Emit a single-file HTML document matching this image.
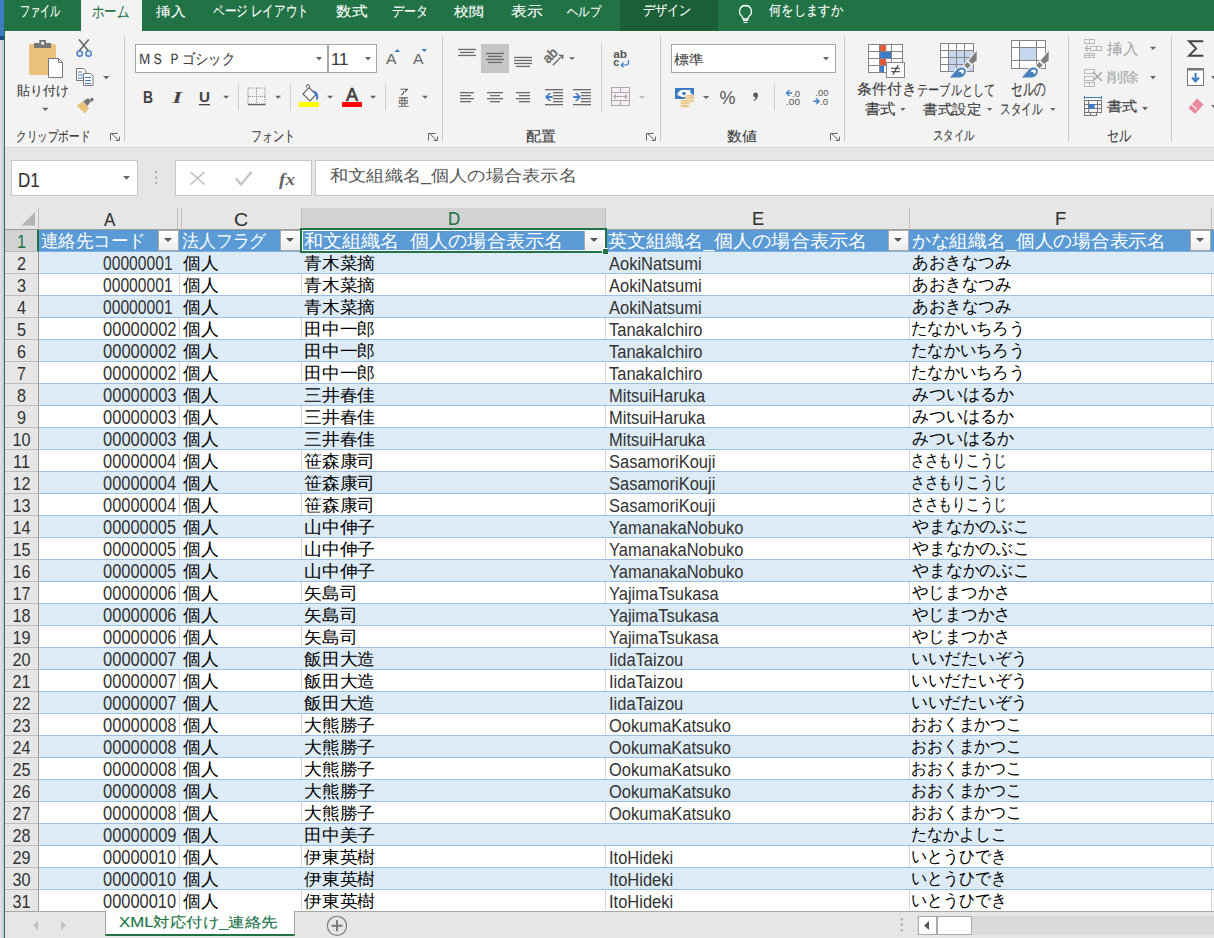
<!DOCTYPE html>
<html><head><meta charset="utf-8">
<style>
*{box-sizing:border-box}
html,body{margin:0;padding:0}
body{width:1214px;height:938px;overflow:hidden;position:relative;background:#e6e6e6;font-family:"Liberation Sans",sans-serif;color:#262626}
.a{position:absolute}
.t{position:absolute;white-space:nowrap;line-height:1;transform-origin:0 0}
#lstrip{left:0;top:0;width:4px;height:938px;background:linear-gradient(to right,#dfe3ec,#c3c9d6)}
#lstrip2{left:0;top:0;width:4px;height:36px;background:#3d7cc2}
#lstrip3{left:0;top:36px;width:4px;height:4px;background:#1f4b84}
#gline{left:4px;top:0;width:1px;height:938px;background:#217346}
#tabbar{left:4px;top:0;width:1210px;height:31px;background:#217346}
#ribbon{left:5px;top:31px;width:1209px;height:117px;background:#f3f3f3;border-bottom:1px solid #d6d6d6}
.box{position:absolute;background:#fff;border:1px solid #c6c6c6}
.sep{position:absolute;width:1px;background:#c8c8c8}
.arr{position:absolute;width:0;height:0;border-left:3px solid transparent;border-right:3px solid transparent;border-top:3px solid #555}
/* grid */
.row{position:absolute;left:39px;width:1175px;height:22px;border-bottom:1px solid #9bc2e6}
.row.bl{background:#ddebf7}
.row.wh{background:#fff linear-gradient(to right,transparent 140px,#d4d4d4 140px,#d4d4d4 141px,transparent 141px,transparent 262px,#d4d4d4 262px,#d4d4d4 263px,transparent 263px,transparent 566px,#d4d4d4 566px,#d4d4d4 567px,transparent 567px,transparent 870px,#d4d4d4 870px,#d4d4d4 871px,transparent 871px,transparent 1172px,#d4d4d4 1172px,#d4d4d4 1173px,transparent 1173px)}
.rh{position:absolute;left:5px;width:34px;height:22px;background:#e6e6e6;border-bottom:1px solid #bdbdbd;border-right:1px solid #9c9c9c}
.ch{position:absolute;top:208px;height:22px;background:#e6e6e6;border-right:1px solid #bdbdbd;border-bottom:1px solid #9b9b9b}
.hdr{position:absolute;top:230px;height:22px;background:#5b9bd5;border-bottom:1px solid #80b0e0}
.dd{position:absolute;top:230px;width:21px;height:21px;background:linear-gradient(#fff,#ececec);border:1px solid #a8a8a8}
.dd:after{content:"";position:absolute;left:5px;top:7px;border-left:4px solid transparent;border-right:4px solid transparent;border-top:4px solid #555}
#sheetbar{left:5px;top:911px;width:1209px;height:27px;background:#e6e6e6;border-top:1px solid #a8a8a8}
</style></head><body>
<div id="lstrip" class="a"></div><div id="lstrip2" class="a"></div><div id="lstrip3" class="a"></div>
<div id="tabbar" class="a"></div>
<div class="a" style="left:81px;top:0;width:61px;height:31px;background:#f3f3f3"></div>
<div class="a" style="left:620px;top:0;width:98px;height:31px;background:#1b5f38"></div>
<div id="gline" class="a"></div>
<div id="ribbon" class="a"></div>
<!-- formula bar -->
<div class="box" style="left:11px;top:160px;width:127px;height:36px"></div>
<div class="box" style="left:175px;top:160px;width:137px;height:36px"></div>
<div class="box" style="left:315px;top:160px;width:910px;height:36px"></div>
<!-- column headers -->
<div class="ch" style="left:5px;width:34px"></div>
<div class="ch" style="left:39px;width:139px"></div>
<div class="ch" style="left:178px;width:4px"></div>
<div class="ch" style="left:182px;width:120px"></div>
<div class="ch" style="left:302px;width:304px;background:#d2d2d2;border-bottom:none"></div>
<div class="ch" style="left:606px;width:304px"></div>
<div class="ch" style="left:910px;width:302px"></div>
<div class="ch" style="left:1212px;width:10px"></div>
<div class="row bl" style="top:252px"><div class="t" style="left:64.11px;top:1.91px;font-size:19.29px;transform:scaleX(0.8119);color:#333">00000001</div><div class="t" style="left:143.75px;top:2.97px;font-size:17.23px;transform:scaleX(1.0461);color:#000">個人</div><div class="t" style="left:265.45px;top:2.97px;font-size:17.23px;transform:scaleX(1.0461);color:#000">青木菜摘</div><div class="t" style="left:570.20px;top:4.44px;font-size:17.60px;transform:scaleX(0.9378);color:#333">AokiNatsumi</div><div class="t" style="left:872.67px;top:2.60px;font-size:16.97px;transform:scaleX(0.9730);color:#000">あおきなつみ</div></div>
<div class="rh" style="top:252px"><div class="t" style="left:0;width:37.83px;text-align:center;top:3.21px;font-size:18.57px;transform:scaleX(0.8723);color:#333">2</div></div>
<div class="row wh" style="top:274px"><div class="t" style="left:64.11px;top:1.91px;font-size:19.29px;transform:scaleX(0.8119);color:#333">00000001</div><div class="t" style="left:143.75px;top:2.97px;font-size:17.23px;transform:scaleX(1.0461);color:#000">個人</div><div class="t" style="left:265.45px;top:2.97px;font-size:17.23px;transform:scaleX(1.0461);color:#000">青木菜摘</div><div class="t" style="left:570.20px;top:4.44px;font-size:17.60px;transform:scaleX(0.9378);color:#333">AokiNatsumi</div><div class="t" style="left:872.67px;top:2.60px;font-size:16.97px;transform:scaleX(0.9730);color:#000">あおきなつみ</div></div>
<div class="rh" style="top:274px"><div class="t" style="left:0;width:37.83px;text-align:center;top:3.21px;font-size:18.57px;transform:scaleX(0.8723);color:#333">3</div></div>
<div class="row bl" style="top:296px"><div class="t" style="left:64.11px;top:1.91px;font-size:19.29px;transform:scaleX(0.8119);color:#333">00000001</div><div class="t" style="left:143.75px;top:2.97px;font-size:17.23px;transform:scaleX(1.0461);color:#000">個人</div><div class="t" style="left:265.45px;top:2.97px;font-size:17.23px;transform:scaleX(1.0461);color:#000">青木菜摘</div><div class="t" style="left:570.20px;top:4.44px;font-size:17.60px;transform:scaleX(0.9378);color:#333">AokiNatsumi</div><div class="t" style="left:872.67px;top:2.60px;font-size:16.97px;transform:scaleX(0.9730);color:#000">あおきなつみ</div></div>
<div class="rh" style="top:296px"><div class="t" style="left:0;width:37.83px;text-align:center;top:3.21px;font-size:18.57px;transform:scaleX(0.8723);color:#333">4</div></div>
<div class="row wh" style="top:318px"><div class="t" style="left:64.09px;top:1.91px;font-size:19.29px;transform:scaleX(0.8569);color:#333">00000002</div><div class="t" style="left:143.75px;top:2.97px;font-size:17.23px;transform:scaleX(1.0461);color:#000">個人</div><div class="t" style="left:265.45px;top:2.97px;font-size:17.23px;transform:scaleX(1.0461);color:#000">田中一郎</div><div class="t" style="left:570.20px;top:4.44px;font-size:17.60px;transform:scaleX(0.9378);color:#333">TanakaIchiro</div><div class="t" style="left:872.28px;top:2.60px;font-size:16.97px;transform:scaleX(0.9574);color:#000">たなかいちろう</div></div>
<div class="rh" style="top:318px"><div class="t" style="left:0;width:37.83px;text-align:center;top:3.21px;font-size:18.57px;transform:scaleX(0.8723);color:#333">5</div></div>
<div class="row bl" style="top:340px"><div class="t" style="left:64.09px;top:1.91px;font-size:19.29px;transform:scaleX(0.8569);color:#333">00000002</div><div class="t" style="left:143.75px;top:2.97px;font-size:17.23px;transform:scaleX(1.0461);color:#000">個人</div><div class="t" style="left:265.45px;top:2.97px;font-size:17.23px;transform:scaleX(1.0461);color:#000">田中一郎</div><div class="t" style="left:570.20px;top:4.44px;font-size:17.60px;transform:scaleX(0.9378);color:#333">TanakaIchiro</div><div class="t" style="left:872.28px;top:2.60px;font-size:16.97px;transform:scaleX(0.9574);color:#000">たなかいちろう</div></div>
<div class="rh" style="top:340px"><div class="t" style="left:0;width:37.83px;text-align:center;top:3.21px;font-size:18.57px;transform:scaleX(0.8723);color:#333">6</div></div>
<div class="row wh" style="top:362px"><div class="t" style="left:64.09px;top:1.91px;font-size:19.29px;transform:scaleX(0.8569);color:#333">00000002</div><div class="t" style="left:143.75px;top:2.97px;font-size:17.23px;transform:scaleX(1.0461);color:#000">個人</div><div class="t" style="left:265.45px;top:2.97px;font-size:17.23px;transform:scaleX(1.0461);color:#000">田中一郎</div><div class="t" style="left:570.20px;top:4.44px;font-size:17.60px;transform:scaleX(0.9378);color:#333">TanakaIchiro</div><div class="t" style="left:872.28px;top:2.60px;font-size:16.97px;transform:scaleX(0.9574);color:#000">たなかいちろう</div></div>
<div class="rh" style="top:362px"><div class="t" style="left:0;width:37.83px;text-align:center;top:3.21px;font-size:18.57px;transform:scaleX(0.8723);color:#333">7</div></div>
<div class="row bl" style="top:384px"><div class="t" style="left:64.09px;top:1.91px;font-size:19.29px;transform:scaleX(0.8569);color:#333">00000003</div><div class="t" style="left:143.75px;top:2.97px;font-size:17.23px;transform:scaleX(1.0461);color:#000">個人</div><div class="t" style="left:265.45px;top:2.97px;font-size:17.23px;transform:scaleX(1.0461);color:#000">三井春佳</div><div class="t" style="left:570.20px;top:4.44px;font-size:17.60px;transform:scaleX(0.9378);color:#333">MitsuiHaruka</div><div class="t" style="left:872.65px;top:2.60px;font-size:16.97px;transform:scaleX(0.9982);color:#000">みついはるか</div></div>
<div class="rh" style="top:384px"><div class="t" style="left:0;width:37.83px;text-align:center;top:3.21px;font-size:18.57px;transform:scaleX(0.8723);color:#333">8</div></div>
<div class="row wh" style="top:406px"><div class="t" style="left:64.09px;top:1.91px;font-size:19.29px;transform:scaleX(0.8569);color:#333">00000003</div><div class="t" style="left:143.75px;top:2.97px;font-size:17.23px;transform:scaleX(1.0461);color:#000">個人</div><div class="t" style="left:265.45px;top:2.97px;font-size:17.23px;transform:scaleX(1.0461);color:#000">三井春佳</div><div class="t" style="left:570.20px;top:4.44px;font-size:17.60px;transform:scaleX(0.9378);color:#333">MitsuiHaruka</div><div class="t" style="left:872.65px;top:2.60px;font-size:16.97px;transform:scaleX(0.9982);color:#000">みついはるか</div></div>
<div class="rh" style="top:406px"><div class="t" style="left:0;width:37.83px;text-align:center;top:3.21px;font-size:18.57px;transform:scaleX(0.8723);color:#333">9</div></div>
<div class="row bl" style="top:428px"><div class="t" style="left:64.09px;top:1.91px;font-size:19.29px;transform:scaleX(0.8569);color:#333">00000003</div><div class="t" style="left:143.75px;top:2.97px;font-size:17.23px;transform:scaleX(1.0461);color:#000">個人</div><div class="t" style="left:265.45px;top:2.97px;font-size:17.23px;transform:scaleX(1.0461);color:#000">三井春佳</div><div class="t" style="left:570.20px;top:4.44px;font-size:17.60px;transform:scaleX(0.9378);color:#333">MitsuiHaruka</div><div class="t" style="left:872.65px;top:2.60px;font-size:16.97px;transform:scaleX(0.9982);color:#000">みついはるか</div></div>
<div class="rh" style="top:428px"><div class="t" style="left:0;width:37.83px;text-align:center;top:3.21px;font-size:18.57px;transform:scaleX(0.8723);color:#333">10</div></div>
<div class="row wh" style="top:450px"><div class="t" style="left:64.09px;top:1.91px;font-size:19.29px;transform:scaleX(0.8520);color:#333">00000004</div><div class="t" style="left:143.75px;top:2.97px;font-size:17.23px;transform:scaleX(1.0461);color:#000">個人</div><div class="t" style="left:265.45px;top:2.97px;font-size:17.23px;transform:scaleX(1.0461);color:#000">笹森康司</div><div class="t" style="left:570.20px;top:4.44px;font-size:17.60px;transform:scaleX(0.9378);color:#333">SasamoriKouji</div><div class="t" style="left:871.79px;top:2.60px;font-size:16.97px;transform:scaleX(0.8081);color:#000">ささもりこうじ</div></div>
<div class="rh" style="top:450px"><div class="t" style="left:0;width:37.83px;text-align:center;top:3.21px;font-size:18.57px;transform:scaleX(0.8723);color:#333">11</div></div>
<div class="row bl" style="top:472px"><div class="t" style="left:64.09px;top:1.91px;font-size:19.29px;transform:scaleX(0.8520);color:#333">00000004</div><div class="t" style="left:143.75px;top:2.97px;font-size:17.23px;transform:scaleX(1.0461);color:#000">個人</div><div class="t" style="left:265.45px;top:2.97px;font-size:17.23px;transform:scaleX(1.0461);color:#000">笹森康司</div><div class="t" style="left:570.20px;top:4.44px;font-size:17.60px;transform:scaleX(0.9378);color:#333">SasamoriKouji</div><div class="t" style="left:871.79px;top:2.60px;font-size:16.97px;transform:scaleX(0.8081);color:#000">ささもりこうじ</div></div>
<div class="rh" style="top:472px"><div class="t" style="left:0;width:37.83px;text-align:center;top:3.21px;font-size:18.57px;transform:scaleX(0.8723);color:#333">12</div></div>
<div class="row wh" style="top:494px"><div class="t" style="left:64.09px;top:1.91px;font-size:19.29px;transform:scaleX(0.8520);color:#333">00000004</div><div class="t" style="left:143.75px;top:2.97px;font-size:17.23px;transform:scaleX(1.0461);color:#000">個人</div><div class="t" style="left:265.45px;top:2.97px;font-size:17.23px;transform:scaleX(1.0461);color:#000">笹森康司</div><div class="t" style="left:570.20px;top:4.44px;font-size:17.60px;transform:scaleX(0.9378);color:#333">SasamoriKouji</div><div class="t" style="left:871.79px;top:2.60px;font-size:16.97px;transform:scaleX(0.8081);color:#000">ささもりこうじ</div></div>
<div class="rh" style="top:494px"><div class="t" style="left:0;width:37.83px;text-align:center;top:3.21px;font-size:18.57px;transform:scaleX(0.8723);color:#333">13</div></div>
<div class="row bl" style="top:516px"><div class="t" style="left:64.09px;top:1.91px;font-size:19.29px;transform:scaleX(0.8520);color:#333">00000005</div><div class="t" style="left:143.75px;top:2.97px;font-size:17.23px;transform:scaleX(1.0461);color:#000">個人</div><div class="t" style="left:265.45px;top:2.97px;font-size:17.23px;transform:scaleX(1.0461);color:#000">山中伸子</div><div class="t" style="left:570.20px;top:4.44px;font-size:17.60px;transform:scaleX(0.9378);color:#333">YamanakaNobuko</div><div class="t" style="left:873.08px;top:2.60px;font-size:16.97px;transform:scaleX(0.9912);color:#000">やまなかのぶこ</div></div>
<div class="rh" style="top:516px"><div class="t" style="left:0;width:37.83px;text-align:center;top:3.21px;font-size:18.57px;transform:scaleX(0.8723);color:#333">14</div></div>
<div class="row wh" style="top:538px"><div class="t" style="left:64.09px;top:1.91px;font-size:19.29px;transform:scaleX(0.8520);color:#333">00000005</div><div class="t" style="left:143.75px;top:2.97px;font-size:17.23px;transform:scaleX(1.0461);color:#000">個人</div><div class="t" style="left:265.45px;top:2.97px;font-size:17.23px;transform:scaleX(1.0461);color:#000">山中伸子</div><div class="t" style="left:570.20px;top:4.44px;font-size:17.60px;transform:scaleX(0.9378);color:#333">YamanakaNobuko</div><div class="t" style="left:873.08px;top:2.60px;font-size:16.97px;transform:scaleX(0.9912);color:#000">やまなかのぶこ</div></div>
<div class="rh" style="top:538px"><div class="t" style="left:0;width:37.83px;text-align:center;top:3.21px;font-size:18.57px;transform:scaleX(0.8723);color:#333">15</div></div>
<div class="row bl" style="top:560px"><div class="t" style="left:64.09px;top:1.91px;font-size:19.29px;transform:scaleX(0.8520);color:#333">00000005</div><div class="t" style="left:143.75px;top:2.97px;font-size:17.23px;transform:scaleX(1.0461);color:#000">個人</div><div class="t" style="left:265.45px;top:2.97px;font-size:17.23px;transform:scaleX(1.0461);color:#000">山中伸子</div><div class="t" style="left:570.20px;top:4.44px;font-size:17.60px;transform:scaleX(0.9378);color:#333">YamanakaNobuko</div><div class="t" style="left:873.08px;top:2.60px;font-size:16.97px;transform:scaleX(0.9912);color:#000">やまなかのぶこ</div></div>
<div class="rh" style="top:560px"><div class="t" style="left:0;width:37.83px;text-align:center;top:3.21px;font-size:18.57px;transform:scaleX(0.8723);color:#333">16</div></div>
<div class="row wh" style="top:582px"><div class="t" style="left:64.09px;top:1.91px;font-size:19.29px;transform:scaleX(0.8569);color:#333">00000006</div><div class="t" style="left:143.75px;top:2.97px;font-size:17.23px;transform:scaleX(1.0461);color:#000">個人</div><div class="t" style="left:265.45px;top:2.97px;font-size:17.23px;transform:scaleX(1.0461);color:#000">矢島司</div><div class="t" style="left:570.20px;top:4.44px;font-size:17.60px;transform:scaleX(0.9378);color:#333">YajimaTsukasa</div><div class="t" style="left:873.09px;top:2.60px;font-size:16.97px;transform:scaleX(0.9636);color:#000">やじまつかさ</div></div>
<div class="rh" style="top:582px"><div class="t" style="left:0;width:37.83px;text-align:center;top:3.21px;font-size:18.57px;transform:scaleX(0.8723);color:#333">17</div></div>
<div class="row bl" style="top:604px"><div class="t" style="left:64.09px;top:1.91px;font-size:19.29px;transform:scaleX(0.8569);color:#333">00000006</div><div class="t" style="left:143.75px;top:2.97px;font-size:17.23px;transform:scaleX(1.0461);color:#000">個人</div><div class="t" style="left:265.45px;top:2.97px;font-size:17.23px;transform:scaleX(1.0461);color:#000">矢島司</div><div class="t" style="left:570.20px;top:4.44px;font-size:17.60px;transform:scaleX(0.9378);color:#333">YajimaTsukasa</div><div class="t" style="left:873.09px;top:2.60px;font-size:16.97px;transform:scaleX(0.9636);color:#000">やじまつかさ</div></div>
<div class="rh" style="top:604px"><div class="t" style="left:0;width:37.83px;text-align:center;top:3.21px;font-size:18.57px;transform:scaleX(0.8723);color:#333">18</div></div>
<div class="row wh" style="top:626px"><div class="t" style="left:64.09px;top:1.91px;font-size:19.29px;transform:scaleX(0.8569);color:#333">00000006</div><div class="t" style="left:143.75px;top:2.97px;font-size:17.23px;transform:scaleX(1.0461);color:#000">個人</div><div class="t" style="left:265.45px;top:2.97px;font-size:17.23px;transform:scaleX(1.0461);color:#000">矢島司</div><div class="t" style="left:570.20px;top:4.44px;font-size:17.60px;transform:scaleX(0.9378);color:#333">YajimaTsukasa</div><div class="t" style="left:873.09px;top:2.60px;font-size:16.97px;transform:scaleX(0.9636);color:#000">やじまつかさ</div></div>
<div class="rh" style="top:626px"><div class="t" style="left:0;width:37.83px;text-align:center;top:3.21px;font-size:18.57px;transform:scaleX(0.8723);color:#333">19</div></div>
<div class="row bl" style="top:648px"><div class="t" style="left:64.09px;top:1.91px;font-size:19.29px;transform:scaleX(0.8569);color:#333">00000007</div><div class="t" style="left:143.75px;top:2.97px;font-size:17.23px;transform:scaleX(1.0461);color:#000">個人</div><div class="t" style="left:265.45px;top:2.97px;font-size:17.23px;transform:scaleX(1.0461);color:#000">飯田大造</div><div class="t" style="left:570.20px;top:4.44px;font-size:17.60px;transform:scaleX(0.9378);color:#333">IidaTaizou</div><div class="t" style="left:872.25px;top:2.60px;font-size:16.97px;transform:scaleX(0.9850);color:#000">いいだたいぞう</div></div>
<div class="rh" style="top:648px"><div class="t" style="left:0;width:37.83px;text-align:center;top:3.21px;font-size:18.57px;transform:scaleX(0.8723);color:#333">20</div></div>
<div class="row wh" style="top:670px"><div class="t" style="left:64.09px;top:1.91px;font-size:19.29px;transform:scaleX(0.8569);color:#333">00000007</div><div class="t" style="left:143.75px;top:2.97px;font-size:17.23px;transform:scaleX(1.0461);color:#000">個人</div><div class="t" style="left:265.45px;top:2.97px;font-size:17.23px;transform:scaleX(1.0461);color:#000">飯田大造</div><div class="t" style="left:570.20px;top:4.44px;font-size:17.60px;transform:scaleX(0.9378);color:#333">IidaTaizou</div><div class="t" style="left:872.25px;top:2.60px;font-size:16.97px;transform:scaleX(0.9850);color:#000">いいだたいぞう</div></div>
<div class="rh" style="top:670px"><div class="t" style="left:0;width:37.83px;text-align:center;top:3.21px;font-size:18.57px;transform:scaleX(0.8723);color:#333">21</div></div>
<div class="row bl" style="top:692px"><div class="t" style="left:64.09px;top:1.91px;font-size:19.29px;transform:scaleX(0.8569);color:#333">00000007</div><div class="t" style="left:143.75px;top:2.97px;font-size:17.23px;transform:scaleX(1.0461);color:#000">個人</div><div class="t" style="left:265.45px;top:2.97px;font-size:17.23px;transform:scaleX(1.0461);color:#000">飯田大造</div><div class="t" style="left:570.20px;top:4.44px;font-size:17.60px;transform:scaleX(0.9378);color:#333">IidaTaizou</div><div class="t" style="left:872.25px;top:2.60px;font-size:16.97px;transform:scaleX(0.9850);color:#000">いいだたいぞう</div></div>
<div class="rh" style="top:692px"><div class="t" style="left:0;width:37.83px;text-align:center;top:3.21px;font-size:18.57px;transform:scaleX(0.8723);color:#333">22</div></div>
<div class="row wh" style="top:714px"><div class="t" style="left:64.09px;top:1.91px;font-size:19.29px;transform:scaleX(0.8569);color:#333">00000008</div><div class="t" style="left:143.75px;top:2.97px;font-size:17.23px;transform:scaleX(1.0461);color:#000">個人</div><div class="t" style="left:265.45px;top:2.97px;font-size:17.23px;transform:scaleX(1.0461);color:#000">大熊勝子</div><div class="t" style="left:570.20px;top:4.44px;font-size:17.60px;transform:scaleX(0.9378);color:#333">OokumaKatsuko</div><div class="t" style="left:872.31px;top:2.60px;font-size:16.97px;transform:scaleX(0.9332);color:#000">おおくまかつこ</div></div>
<div class="rh" style="top:714px"><div class="t" style="left:0;width:37.83px;text-align:center;top:3.21px;font-size:18.57px;transform:scaleX(0.8723);color:#333">23</div></div>
<div class="row bl" style="top:736px"><div class="t" style="left:64.09px;top:1.91px;font-size:19.29px;transform:scaleX(0.8569);color:#333">00000008</div><div class="t" style="left:143.75px;top:2.97px;font-size:17.23px;transform:scaleX(1.0461);color:#000">個人</div><div class="t" style="left:265.45px;top:2.97px;font-size:17.23px;transform:scaleX(1.0461);color:#000">大熊勝子</div><div class="t" style="left:570.20px;top:4.44px;font-size:17.60px;transform:scaleX(0.9378);color:#333">OokumaKatsuko</div><div class="t" style="left:872.31px;top:2.60px;font-size:16.97px;transform:scaleX(0.9332);color:#000">おおくまかつこ</div></div>
<div class="rh" style="top:736px"><div class="t" style="left:0;width:37.83px;text-align:center;top:3.21px;font-size:18.57px;transform:scaleX(0.8723);color:#333">24</div></div>
<div class="row wh" style="top:758px"><div class="t" style="left:64.09px;top:1.91px;font-size:19.29px;transform:scaleX(0.8569);color:#333">00000008</div><div class="t" style="left:143.75px;top:2.97px;font-size:17.23px;transform:scaleX(1.0461);color:#000">個人</div><div class="t" style="left:265.45px;top:2.97px;font-size:17.23px;transform:scaleX(1.0461);color:#000">大熊勝子</div><div class="t" style="left:570.20px;top:4.44px;font-size:17.60px;transform:scaleX(0.9378);color:#333">OokumaKatsuko</div><div class="t" style="left:872.31px;top:2.60px;font-size:16.97px;transform:scaleX(0.9332);color:#000">おおくまかつこ</div></div>
<div class="rh" style="top:758px"><div class="t" style="left:0;width:37.83px;text-align:center;top:3.21px;font-size:18.57px;transform:scaleX(0.8723);color:#333">25</div></div>
<div class="row bl" style="top:780px"><div class="t" style="left:64.09px;top:1.91px;font-size:19.29px;transform:scaleX(0.8569);color:#333">00000008</div><div class="t" style="left:143.75px;top:2.97px;font-size:17.23px;transform:scaleX(1.0461);color:#000">個人</div><div class="t" style="left:265.45px;top:2.97px;font-size:17.23px;transform:scaleX(1.0461);color:#000">大熊勝子</div><div class="t" style="left:570.20px;top:4.44px;font-size:17.60px;transform:scaleX(0.9378);color:#333">OokumaKatsuko</div><div class="t" style="left:872.31px;top:2.60px;font-size:16.97px;transform:scaleX(0.9332);color:#000">おおくまかつこ</div></div>
<div class="rh" style="top:780px"><div class="t" style="left:0;width:37.83px;text-align:center;top:3.21px;font-size:18.57px;transform:scaleX(0.8723);color:#333">26</div></div>
<div class="row wh" style="top:802px"><div class="t" style="left:64.09px;top:1.91px;font-size:19.29px;transform:scaleX(0.8569);color:#333">00000008</div><div class="t" style="left:143.75px;top:2.97px;font-size:17.23px;transform:scaleX(1.0461);color:#000">個人</div><div class="t" style="left:265.45px;top:2.97px;font-size:17.23px;transform:scaleX(1.0461);color:#000">大熊勝子</div><div class="t" style="left:570.20px;top:4.44px;font-size:17.60px;transform:scaleX(0.9378);color:#333">OokumaKatsuko</div><div class="t" style="left:872.31px;top:2.60px;font-size:16.97px;transform:scaleX(0.9332);color:#000">おおくまかつこ</div></div>
<div class="rh" style="top:802px"><div class="t" style="left:0;width:37.83px;text-align:center;top:3.21px;font-size:18.57px;transform:scaleX(0.8723);color:#333">27</div></div>
<div class="row bl" style="top:824px"><div class="t" style="left:64.09px;top:1.91px;font-size:19.29px;transform:scaleX(0.8569);color:#333">00000009</div><div class="t" style="left:143.75px;top:2.97px;font-size:17.23px;transform:scaleX(1.0461);color:#000">個人</div><div class="t" style="left:265.45px;top:2.97px;font-size:17.23px;transform:scaleX(1.0461);color:#000">田中美子</div><div class="t" style="left:872.31px;top:2.60px;font-size:16.97px;transform:scaleX(0.9366);color:#000">たなかよしこ</div></div>
<div class="rh" style="top:824px"><div class="t" style="left:0;width:37.83px;text-align:center;top:3.21px;font-size:18.57px;transform:scaleX(0.8723);color:#333">28</div></div>
<div class="row wh" style="top:846px"><div class="t" style="left:64.09px;top:1.91px;font-size:19.29px;transform:scaleX(0.8520);color:#333">00000010</div><div class="t" style="left:143.75px;top:2.97px;font-size:17.23px;transform:scaleX(1.0461);color:#000">個人</div><div class="t" style="left:265.45px;top:2.97px;font-size:17.23px;transform:scaleX(1.0461);color:#000">伊東英樹</div><div class="t" style="left:570.20px;top:4.44px;font-size:17.60px;transform:scaleX(0.9378);color:#333">ItoHideki</div><div class="t" style="left:872.30px;top:2.60px;font-size:16.97px;transform:scaleX(0.9407);color:#000">いとうひでき</div></div>
<div class="rh" style="top:846px"><div class="t" style="left:0;width:37.83px;text-align:center;top:3.21px;font-size:18.57px;transform:scaleX(0.8723);color:#333">29</div></div>
<div class="row bl" style="top:868px"><div class="t" style="left:64.09px;top:1.91px;font-size:19.29px;transform:scaleX(0.8520);color:#333">00000010</div><div class="t" style="left:143.75px;top:2.97px;font-size:17.23px;transform:scaleX(1.0461);color:#000">個人</div><div class="t" style="left:265.45px;top:2.97px;font-size:17.23px;transform:scaleX(1.0461);color:#000">伊東英樹</div><div class="t" style="left:570.20px;top:4.44px;font-size:17.60px;transform:scaleX(0.9378);color:#333">ItoHideki</div><div class="t" style="left:872.30px;top:2.60px;font-size:16.97px;transform:scaleX(0.9407);color:#000">いとうひでき</div></div>
<div class="rh" style="top:868px"><div class="t" style="left:0;width:37.83px;text-align:center;top:3.21px;font-size:18.57px;transform:scaleX(0.8723);color:#333">30</div></div>
<div class="row wh" style="top:890px"><div class="t" style="left:64.09px;top:1.91px;font-size:19.29px;transform:scaleX(0.8520);color:#333">00000010</div><div class="t" style="left:143.75px;top:2.97px;font-size:17.23px;transform:scaleX(1.0461);color:#000">個人</div><div class="t" style="left:265.45px;top:2.97px;font-size:17.23px;transform:scaleX(1.0461);color:#000">伊東英樹</div><div class="t" style="left:570.20px;top:4.44px;font-size:17.60px;transform:scaleX(0.9378);color:#333">ItoHideki</div><div class="t" style="left:872.30px;top:2.60px;font-size:16.97px;transform:scaleX(0.9407);color:#000">いとうひでき</div></div>
<div class="rh" style="top:890px"><div class="t" style="left:0;width:37.83px;text-align:center;top:3.21px;font-size:18.57px;transform:scaleX(0.8723);color:#333">31</div></div>
<!-- header row 1 -->
<div class="hdr" style="left:39px;width:1175px"></div>
<div class="t" style="left:41.37px;top:232.67px;font-size:17.75px;transform:scaleX(0.9706);color:#fff">連絡先コード</div>
<div class="t" style="left:182.18px;top:232.67px;font-size:17.75px;transform:scaleX(0.9372);color:#fff">法人フラグ</div>
<div class="t" style="left:304.23px;top:232.67px;font-size:17.75px;transform:scaleX(1.0622);color:#fff">和文組織名_個人の場合表示名</div>
<div class="t" style="left:608.23px;top:232.67px;font-size:17.75px;transform:scaleX(1.0622);color:#fff">英文組織名_個人の場合表示名</div>
<div class="t" style="left:912.44px;top:232.67px;font-size:17.75px;transform:scaleX(1.0406);color:#fff">かな組織名_個人の場合表示名</div>
<div class="rh" style="top:230px;background:#d2d2d2;border-right:2px solid #217346"><div class="t" style="left:0;width:37.83px;text-align:center;top:3.21px;font-size:18.57px;transform:scaleX(0.8723);color:#217346">1</div></div>
<div class="dd" style="left:158px"></div>
<div class="dd" style="left:280px"></div>
<div class="dd" style="left:584px"></div>
<div class="dd" style="left:888px"></div>
<div class="dd" style="left:1190px"></div>
<div class="a" style="left:300px;top:228px;width:307px;height:25px;border:2px solid #217346;box-shadow:inset 0 0 0 1px #fff"></div>
<div class="a" style="left:602px;top:248px;width:6px;height:6px;background:#217346;border-top:1px solid #fff;border-left:1px solid #fff"></div>
<div id="sheetbar" class="a"></div>
<div class="a" style="left:105px;top:911px;width:190px;height:25px;background:#fff;border-left:1px solid #a8a8a8;border-right:1px solid #a8a8a8;border-bottom:2px solid #217346"></div>
<svg class="a" style="left:0;top:0" width="1214" height="938" viewBox="0 0 1214 938">
<g shape-rendering="crispEdges">
<!-- group separators -->
<rect x="124" y="36" width="1" height="106" fill="#c8c8c8"/>
<rect x="442" y="36" width="1" height="106" fill="#c8c8c8"/>
<rect x="660" y="36" width="1" height="106" fill="#c8c8c8"/>
<rect x="844" y="36" width="1" height="106" fill="#c8c8c8"/>
<rect x="1068" y="36" width="1" height="106" fill="#c8c8c8"/>
<rect x="1171" y="36" width="1" height="106" fill="#c8c8c8"/>
<!-- small separators -->
<rect x="238" y="84" width="1" height="27" fill="#d0d0d0"/>
<rect x="290" y="84" width="1" height="27" fill="#d0d0d0"/>
<rect x="385" y="84" width="1" height="27" fill="#d0d0d0"/>
<rect x="601" y="43" width="1" height="69" fill="#d0d0d0"/>
<rect x="774" y="84" width="1" height="27" fill="#d0d0d0"/>
<!-- font name / size boxes -->
<rect x="135.5" y="44.5" width="192" height="28" fill="#fff" stroke="#a6a6a6"/>
<rect x="328.5" y="44.5" width="48" height="28" fill="#fff" stroke="#a6a6a6"/>
<rect x="671.5" y="44.5" width="164" height="28" fill="#fff" stroke="#a6a6a6"/>
<!-- highlight middle align -->
<rect x="481" y="44" width="28" height="29" fill="#c6c6c6"/>
</g>
<!-- dropdown arrows -->
<g fill="#666">
<path d="M316 57h6l-3 3.5z"/>
<path d="M365 57h6l-3 3.5z"/>
<path d="M823 57h6l-3 3.5z"/>
<path d="M42 107.7h6.5l-3.25 3.4z"/>
<path d="M103 76h6.5l-3.25 3.3z"/>
<path d="M223 95.8h6.2l-3.1 3z"/>
<path d="M275 95.8h6.2l-3.1 3z"/>
<path d="M327 95.8h6.2l-3.1 3z"/>
<path d="M370 95.8h6.2l-3.1 3z"/>
<path d="M422 95.8h6.2l-3.1 3z"/>
<path d="M569 57.2h6l-3 2.8z"/>
<path d="M703 96h6.2l-3.1 3z"/>
<path d="M900.3 108h5.2l-2.6 3z"/>
<path d="M987 108h5.2l-2.6 3z"/>
<path d="M1050.2 108h5.2l-2.6 3z"/>
<path d="M1150 46.8h6l-3 3.2z"/>
<path d="M1150 76h6l-3 3.2z"/>
<path d="M1142 107h6l-3 3.2z"/>

<path d="M1211 76h6l-3 3.2z"/>
<path d="M1211 105h6l-3 3.2z"/>
</g>
<path d="M639 96h6l-3 3z" fill="#bdbdbd"/>
<!-- dialog launchers -->
<g fill="none" stroke="#666" stroke-width="1">
<path d="M110.5 140.5v-7h7M112 134l7 6.5M119.5 136.5v4h-4"/>
<path d="M428.5 140.5v-7h7M430 134l7 6.5M437.5 136.5v4h-4"/>
<path d="M646.5 140.5v-7h7M648 134l7 6.5M655.5 136.5v4h-4"/>
<path d="M830.5 140.5v-7h7M832 134l7 6.5M839.5 136.5v4h-4"/>
</g>
<!-- paste icon -->
<rect x="29" y="44" width="27" height="31" rx="1.5" fill="#ebc27c"/>
<rect x="34" y="43" width="17" height="5" fill="#777"/>
<rect x="39.3" y="40" width="6.6" height="4" fill="#777"/>
<rect x="41.2" y="41.8" width="2.8" height="2.8" fill="#f3f3f3"/>
<path d="M48.5 58.5h10l4 4v15h-14z" fill="#fff" stroke="#777"/>
<path d="M58.5 58.5v4h4" fill="none" stroke="#777"/>
<!-- scissors -->
<g stroke="#666" stroke-width="1.6" fill="none">
<path d="M79 39.5l9.5 11.5M88.7 39.5l-9.5 11.5"/>
</g>
<g stroke="#3d7bc4" stroke-width="1.4" fill="none">
<circle cx="79.7" cy="53.6" r="2.7"/><circle cx="88.6" cy="53.6" r="2.7"/>
</g>
<!-- copy -->
<path d="M76.5 68.5h7l2.5 2.5v9.5h-9.5z" fill="#fff" stroke="#777"/>
<path d="M83.5 73.5h7l2.5 2.5v9.5h-9.5z" fill="#fff" stroke="#777"/>
<g fill="#3d7bc4"><rect x="78" y="71.5" width="4" height="1"/><rect x="78" y="74.5" width="5" height="1"/><rect x="78" y="77.5" width="5" height="1"/>
<rect x="85" y="77" width="6" height="1"/><rect x="85" y="80" width="6" height="1"/><rect x="85" y="83" width="6" height="1"/></g>
<!-- brush -->
<path d="M76.5 105.5l6-4 6.5 6.5-4 5.5z" fill="#ebc27c"/>
<path d="M83 101.5l5-3.5 3 3-3.5 5z" fill="#777"/>
<path d="M89.5 99.5l2.5-2 2 2-2 2.5z" fill="#777"/>
<!-- font size grow/shrink -->
<text x="386" y="64.3" font-family="Liberation Sans" font-size="15" fill="#666" textLength="10.5" lengthAdjust="spacingAndGlyphs">A</text>
<path d="M394.5 52h5.5l-2.75-3z" fill="#3d7bc4"/>
<text x="413" y="64.3" font-family="Liberation Sans" font-size="15" fill="#666" textLength="10.5" lengthAdjust="spacingAndGlyphs">A</text>
<path d="M421.5 49h5.5l-2.75 3z" fill="#3d7bc4"/>
<!-- B I U -->
<text x="143" y="103" font-family="Liberation Sans" font-weight="bold" font-size="16" fill="#444" textLength="10" lengthAdjust="spacingAndGlyphs">B</text>
<text x="172.5" y="103" font-family="Liberation Serif" font-style="italic" font-weight="bold" font-size="16.5" fill="#444" textLength="9.5" lengthAdjust="spacingAndGlyphs">I</text>
<text x="199" y="102" font-family="Liberation Sans" font-weight="bold" font-size="15" fill="#444" textLength="11" lengthAdjust="spacingAndGlyphs">U</text>
<rect x="199" y="104" width="11" height="1.3" fill="#444"/>
<!-- borders icon -->
<g fill="none" stroke="#888" stroke-width="1" stroke-dasharray="1 1">
<rect x="248" y="88" width="17" height="16"/>
<path d="M256.5 88v16M248 96.5h17"/>
</g>
<rect x="248" y="104" width="17.5" height="1.3" fill="#666"/>
<!-- fill color -->
<path d="M303 94l6-6.5 7 7-6 6.5z" fill="#fff" stroke="#666" stroke-width="1.2"/>
<path d="M306.5 87.5v-1.5a1.5 1.5 0 0 1 3 0v3" fill="none" stroke="#666" stroke-width="1"/>
<path d="M313 90.5c3 0.5 5.3 3 5.3 6.2 0 1.8-0.6 3.3-1.6 4.6l-0.6-4.5z" fill="#3d7bc4"/>
<rect x="299" y="102" width="20" height="5" fill="#ffff00"/>
<!-- font color -->
<text x="346" y="101" font-family="Liberation Sans" font-size="17.5" fill="#444" stroke="#444" stroke-width="0.7" textLength="12" lengthAdjust="spacingAndGlyphs">A</text>
<rect x="342" y="102" width="20" height="5" fill="#ff0000"/>
<!-- phonetic -->
<path d="M400.5 89.3h6.8l-2.3 2.6M403.8 91.2c0 1.8-0.8 3-2.6 3.8" fill="none" stroke="#555" stroke-width="1.1"/>
<text x="398" y="105.5" font-family="Liberation Sans" font-size="11" fill="#555" stroke="#555" stroke-width="0.2">亜</text>
<!-- align top/mid/bottom -->
<g fill="#6b6b6b">
<rect x="458" y="48.8" width="18" height="1.3"/><rect x="460" y="51.8" width="14" height="1.3"/><rect x="458" y="54.8" width="18" height="1.3"/>
<rect x="486" y="52.8" width="18" height="1.3"/><rect x="488" y="55.8" width="14" height="1.3"/><rect x="486" y="58.8" width="18" height="1.3"/><rect x="488" y="61.8" width="14" height="1.3"/>
<rect x="514" y="56.8" width="18" height="1.3"/><rect x="514" y="59.8" width="18" height="1.3"/><rect x="514" y="62.8" width="18" height="1.3"/><rect x="516" y="65.8" width="14" height="1.3"/>
<!-- left center right -->
<rect x="460" y="92" width="14" height="1.3"/><rect x="460" y="95" width="11" height="1.3"/><rect x="460" y="98" width="14" height="1.3"/><rect x="460" y="101" width="11" height="1.3"/>
<rect x="487" y="92" width="16" height="1.3"/><rect x="490" y="95" width="10" height="1.3"/><rect x="487" y="98" width="16" height="1.3"/><rect x="490" y="101" width="10" height="1.3"/>
<rect x="516" y="92" width="14" height="1.3"/><rect x="519" y="95" width="11" height="1.3"/><rect x="516" y="98" width="14" height="1.3"/><rect x="519" y="101" width="11" height="1.3"/>
<!-- indents -->
<rect x="545" y="89" width="18" height="1.3"/><rect x="553" y="92" width="10" height="1.3"/><rect x="553" y="95" width="10" height="1.3"/><rect x="553" y="98" width="10" height="1.3"/><rect x="553" y="101" width="10" height="1.3"/><rect x="545" y="104" width="18" height="1.3"/>
<rect x="573" y="89" width="18" height="1.3"/><rect x="581" y="92" width="10" height="1.3"/><rect x="581" y="95" width="10" height="1.3"/><rect x="581" y="98" width="10" height="1.3"/><rect x="581" y="101" width="10" height="1.3"/><rect x="573" y="104" width="18" height="1.3"/>
</g>
<g fill="#3d7bc4">
<path d="M545 97l4-4h2.2l-3 3h4.5v2h-4.5l3 3h-2.2z"/>
<path d="M581 97l-4-4h-2.2l3 3h-4.5v2h4.5l-3 3h2.2z"/>
</g>
<!-- orientation -->
<text x="0" y="0" transform="translate(548 64) rotate(-45)" font-family="Liberation Sans" font-size="13.5" fill="#666" stroke="#666" stroke-width="0.5">ab</text>
<path d="M552.8 65.2l9.8-9.8M559 55.3h3.7v3.7" fill="none" stroke="#666" stroke-width="1.3"/>
<!-- wrap text -->
<text x="613.3" y="57.7" font-family="Liberation Sans" font-weight="bold" font-size="11" fill="#555" textLength="13.8" lengthAdjust="spacingAndGlyphs">ab</text>
<text x="613.3" y="66" font-family="Liberation Sans" font-weight="bold" font-size="11" fill="#555" textLength="6" lengthAdjust="spacingAndGlyphs">c</text>
<path d="M628.5 60v2.5a2.5 2.5 0 0 1-2.5 2.5h-4M623.5 62.5l-2.2 2.5 2.2 2.3" fill="none" stroke="#3d7bc4" stroke-width="1.2"/>
<!-- merge -->
<rect x="611.5" y="87.5" width="18" height="18" fill="#f6eef4" stroke="#aaa"/>
<path d="M611.5 92.5h18M611.5 100.5h18M620.5 87.5v5M620.5 100.5v5" stroke="#aaa" fill="none"/>
<path d="M614 96.5h13M616 94.5l-2 2 2 2M625 94.5l2 2-2 2" stroke="#aaa" fill="none" stroke-width="1.2"/>
<!-- currency -->
<rect x="675" y="88" width="19" height="11" fill="#3d7bc4"/>
<path d="M677.5 93.5q2-3.5 4-3.5h9q-1 2.5 1 3.5v2q-2 0-1 1.5h-9q-1-2-4-1.5z" fill="#fff"/>
<circle cx="684" cy="93.5" r="1.8" fill="#3d7bc4"/>
<g fill="#ebc27c" stroke="#f3f3f3" stroke-width="0.6">
<ellipse cx="689.5" cy="96" rx="4.8" ry="1.5"/><ellipse cx="689.5" cy="98.5" rx="4.8" ry="1.5"/><ellipse cx="689.5" cy="101" rx="4.8" ry="1.5"/>
<ellipse cx="685" cy="101" rx="4.8" ry="1.5"/><ellipse cx="685" cy="103.5" rx="4.8" ry="1.5"/><ellipse cx="685" cy="106" rx="4.8" ry="1.5"/>
</g>
<!-- % , -->
<text x="719.5" y="104" font-family="Liberation Sans" font-size="17.5" fill="#555" textLength="16" lengthAdjust="spacingAndGlyphs">%</text>
<circle cx="755.6" cy="95" r="2.4" fill="#555"/><path d="M757.6 95.5c0.3 2.5-1 4.5-3.8 5.5l-0.4-0.8c1.8-1 2.5-2.2 2.4-3.8z" fill="#555"/>
<!-- decimals -->
<text x="792" y="96.5" font-family="Liberation Sans" font-size="9.5" fill="#555" textLength="8" lengthAdjust="spacingAndGlyphs">.0</text>
<text x="786" y="104.8" font-family="Liberation Sans" font-size="9.5" fill="#555" textLength="14" lengthAdjust="spacingAndGlyphs">.00</text>
<path d="M785.5 93l3-3h1.8l-2.2 2.2h4v1.6h-4l2.2 2.2h-1.8z" fill="#3d7bc4"/>
<text x="815.5" y="96.3" font-family="Liberation Sans" font-size="9.5" fill="#555" textLength="13" lengthAdjust="spacingAndGlyphs">.00</text>
<text x="820" y="104.6" font-family="Liberation Sans" font-size="9.5" fill="#555" textLength="8" lengthAdjust="spacingAndGlyphs">.0</text>
<path d="M820 101.3l-3-3h-1.8l2.2 2.2h-4v1.6h4l-2.2 2.2h1.8z" fill="#3d7bc4"/>
<!-- conditional formatting -->
<g shape-rendering="crispEdges">
<rect x="868" y="44" width="34" height="28" fill="#fff"/>
<rect x="879" y="44.5" width="6.5" height="6.5" fill="#dd5a3b"/>
<rect x="879" y="51.5" width="11.5" height="6.5" fill="#3d7cc9"/>
<rect x="879" y="58.5" width="7" height="6.5" fill="#dd5a3b"/>
<rect x="879" y="65.5" width="5" height="6.5" fill="#3d7cc9"/>
<g fill="none" stroke="#858585"><rect x="868" y="44" width="34" height="28"/><path d="M879 44v28M891 44v28M868 51h34M868 58h34M868 65h34"/></g>
<rect x="886" y="62.5" width="18.5" height="15" fill="#fff" stroke="#858585"/>
</g>
<path d="M891 68.3h9M891 71.7h9M898.2 65.2l-5.4 9.6" fill="none" stroke="#333" stroke-width="1.1"/>
<!-- format as table -->
<g shape-rendering="crispEdges">
<rect x="940" y="43" width="33" height="28" fill="#fff"/>
<rect x="948.5" y="50" width="24.5" height="21" fill="#c5d7ee"/>
<g fill="none" stroke="#858585"><rect x="940" y="43" width="33" height="28"/><path d="M948.5 43v28M956.5 43v28M964.5 43v28M940 50h33M940 57h33M940 64h33"/></g>
</g>



<g transform="translate(0 0)">
<path d="M976.7 51v9.3l-4.5 3.7-3.7-3.3zM967.4 62l3.3 3.3-3.3 3.2-3.2-3.2zM949.9 77.6h10c3 0 6-3.5 6-6.5 0-2.5-2-3.7-4.1-3.7-1.7 0-3.2 0.5-4.5 1.5z" fill="#f3f3f3" stroke="#f3f3f3" stroke-width="2"/>
<path d="M976.7 51v9.3l-4.5 3.7-3.7-3.3z" fill="#7f7f7f"/>
<path d="M967.4 62l3.3 3.3-3.3 3.2-3.2-3.2z" fill="#7f7f7f"/>
<path d="M949.9 77.6h10c3 0 6-3.5 6-6.5 0-2.5-2-3.7-4.1-3.7-1.7 0-3.2 0.5-4.5 1.5z" fill="#4a82c0"/>
<path d="M958.5 71.5c1-1.8 3.5-2.8 5-1.5 1 1 0.5 3-1 4.3-0.5-1.5-2-2.8-4-2.8z" fill="#fff"/>
</g>
<!-- cell styles -->
<g shape-rendering="crispEdges">
<rect x="1011" y="40" width="34" height="28.5" fill="#fff"/>
<rect x="1019" y="47" width="17.5" height="13.5" fill="#c5d7ee"/>
<g fill="none" stroke="#858585"><rect x="1011" y="40" width="34" height="28.5"/><path d="M1019 40v28.5M1036.5 40v28.5M1011 47h34M1011 60.5h34"/></g>
</g>



<g transform="translate(72 0)">
<path d="M976.7 51v9.3l-4.5 3.7-3.7-3.3zM967.4 62l3.3 3.3-3.3 3.2-3.2-3.2zM949.9 77.6h10c3 0 6-3.5 6-6.5 0-2.5-2-3.7-4.1-3.7-1.7 0-3.2 0.5-4.5 1.5z" fill="#f3f3f3" stroke="#f3f3f3" stroke-width="2"/>
<path d="M976.7 51v9.3l-4.5 3.7-3.7-3.3z" fill="#7f7f7f"/>
<path d="M967.4 62l3.3 3.3-3.3 3.2-3.2-3.2z" fill="#7f7f7f"/>
<path d="M949.9 77.6h10c3 0 6-3.5 6-6.5 0-2.5-2-3.7-4.1-3.7-1.7 0-3.2 0.5-4.5 1.5z" fill="#4a82c0"/>
<path d="M958.5 71.5c1-1.8 3.5-2.8 5-1.5 1 1 0.5 3-1 4.3-0.5-1.5-2-2.8-4-2.8z" fill="#fff"/>
</g>
<!-- cells: insert/delete/format -->
<g fill="none" stroke="#b8b8b8" shape-rendering="crispEdges">
<rect x="1084.5" y="39.5" width="10" height="4"/><path d="M1089.5 39.5v4"/>
<rect x="1090.5" y="46.5" width="11" height="4"/><path d="M1096.5 46.5v4"/>
<rect x="1084.5" y="53.5" width="10" height="4"/><path d="M1089.5 53.5v4M1084.5 55.5h10"/>
<rect x="1084.5" y="69.5" width="10" height="4"/>
<rect x="1084.5" y="76.5" width="9" height="4"/>
<rect x="1084.5" y="82.5" width="10" height="3.5"/><path d="M1089.5 82.5v3.5"/>
</g>
<path d="M1085 48.5l3-3M1085 48.5l3 3M1085 48.5h5" fill="none" stroke="#b0b0b0" stroke-width="1.2"/>
<path d="M1093 72l9 9M1102 72l-9 9" fill="none" stroke="#a8a8a8" stroke-width="1.6"/>
<g fill="none" stroke="#777" shape-rendering="crispEdges">
<rect x="1084.5" y="100.5" width="17" height="12"/><path d="M1088.5 100.5v12M1097.5 100.5v12M1084.5 104.5h17M1084.5 108.5h17"/>
<path d="M1084.5 112.5v3h6v-3M1090.5 115.5h6v-3"/>
</g>
<rect x="1089" y="104" width="5.5" height="5" fill="#3d7bc4"/>
<path d="M1085 97.5h16M1084.5 96v3M1101.5 96v3" fill="none" stroke="#3d7bc4" stroke-width="1"/>
<!-- sigma / fill / clear -->
<path d="M1203.2 41.2h-14.2l7.2 7.3-7.2 7.2h14.4" fill="none" stroke="#444" stroke-width="1.9" stroke-linejoin="miter"/>
<rect x="1187.5" y="68.5" width="16" height="17" fill="#fff" stroke="#777"/>
<rect x="1187" y="68" width="17" height="2.5" fill="#777"/>
<path d="M1195.5 73v8M1192 77.5l3.5 4 3.5-4" fill="none" stroke="#3d7bc4" stroke-width="2"/>
<path d="M1188.5 108l8.5-9.5 6.5 6-8.5 9.5z" fill="#e88a9a"/>
<path d="M1191.5 104.5l5.5 5" stroke="#f3f3f3" stroke-width="1.2"/>
<!-- lightbulb -->
<path d="M745.5 5.5a6 6 0 0 0-3.8 10.6c0.8 0.8 1.3 1.7 1.3 2.9h5c0-1.2 0.5-2.1 1.3-2.9a6 6 0 0 0-3.8-10.6z" fill="none" stroke="#fff" stroke-width="1.3"/>
<path d="M743 20.5h5M743.5 22.5h4" stroke="#fff" stroke-width="1.2"/>
</svg>
<svg class="a" style="left:0;top:0" width="1214" height="938" viewBox="0 0 1214 938">
<!-- name box arrow -->
<path d="M123 176h7l-3.5 3.8z" fill="#666"/>
<!-- dots -->
<g fill="#b0b0b0"><rect x="155" y="171" width="2.2" height="2.2"/><rect x="155" y="176.5" width="2.2" height="2.2"/><rect x="155" y="182" width="2.2" height="2.2"/></g>
<!-- x check fx -->
<path d="M190.5 172l14 12.5M204.5 172l-14 12.5" stroke="#bdbdbd" stroke-width="1.6" fill="none"/>
<path d="M236 178.5l5 6 10.5-12.5" stroke="#c4c4c4" stroke-width="2.4" fill="none"/>
<text x="279" y="184.5" font-family="Liberation Serif" font-style="italic" font-weight="bold" font-size="17" fill="#666" textLength="16" lengthAdjust="spacingAndGlyphs">fx</text>
<!-- corner triangle -->
<path d="M35 212v13.5h-13.5z" fill="#b4b4b4"/>
<!-- sheet nav -->
<path d="M38 921v9l-5-4.5z" fill="#c0c0c0"/>
<path d="M61 921v9l5-4.5z" fill="#c0c0c0"/>
<!-- plus -->
<circle cx="337" cy="925.8" r="9.6" fill="none" stroke="#7a7a7a" stroke-width="1.1"/>
<path d="M331.5 925.8h11M337 920.3v11" stroke="#7a7a7a" stroke-width="2"/>
<!-- dots -->
<g fill="#b8b8b8"><rect x="900.5" y="918" width="2.5" height="2.5"/><rect x="900.5" y="923.5" width="2.5" height="2.5"/><rect x="900.5" y="929" width="2.5" height="2.5"/></g>
<!-- scrollbar -->
<rect x="917" y="916" width="297" height="19" fill="#dadada"/>
<rect x="918.5" y="916.5" width="18" height="18" fill="#fff" stroke="#ababab"/>
<rect x="937.5" y="916.5" width="34" height="18" fill="#fff" stroke="#ababab"/>
<path d="M929 921v9l-5-4.5z" fill="#555"/>
</svg>

<div class="t" style="left:20.16px;top:3.09px;font-size:15.29px;transform:scaleX(0.6777);color:#ffffff;-webkit-text-stroke:0.12px #ffffff;">ファイル</div>
<div class="t" style="left:91.77px;top:2.56px;font-size:16.25px;transform:scaleX(0.7767);color:#217346;-webkit-text-stroke:0.12px #217346;">ホーム</div>
<div class="t" style="left:155.80px;top:4.67px;font-size:13.33px;transform:scaleX(1.1231);color:#ffffff;-webkit-text-stroke:0.12px #ffffff;">挿入</div>
<div class="t" style="left:212.61px;top:3.09px;font-size:15.29px;transform:scaleX(0.7694);color:#ffffff;-webkit-text-stroke:0.12px #ffffff;">ページ レイアウト</div>
<div class="t" style="left:335.62px;top:4.66px;font-size:13.68px;transform:scaleX(1.1130);color:#ffffff;-webkit-text-stroke:0.12px #ffffff;">数式</div>
<div class="t" style="left:392.18px;top:3.56px;font-size:14.44px;transform:scaleX(0.8555);color:#ffffff;-webkit-text-stroke:0.12px #ffffff;">データ</div>
<div class="t" style="left:453.80px;top:4.67px;font-size:13.33px;transform:scaleX(1.1346);color:#ffffff;-webkit-text-stroke:0.12px #ffffff;">校閲</div>
<div class="t" style="left:510.62px;top:4.66px;font-size:13.68px;transform:scaleX(1.1243);color:#ffffff;-webkit-text-stroke:0.12px #ffffff;">表示</div>
<div class="t" style="left:567.01px;top:5.00px;font-size:13.33px;transform:scaleX(0.8680);color:#ffffff;-webkit-text-stroke:0.12px #ffffff;">ヘルプ</div>
<div class="t" style="left:643.41px;top:4.32px;font-size:13.68px;transform:scaleX(0.8677);color:#ffffff;-webkit-text-stroke:0.12px #ffffff;">デザイン</div>
<div class="t" style="left:768.70px;top:3.97px;font-size:13.68px;transform:scaleX(0.8817);color:#ffffff;-webkit-text-stroke:0.12px #ffffff;">何をしますか</div>
<div class="t" style="left:16.58px;top:83.57px;font-size:13.10px;transform:scaleX(0.9899);color:#3b3b3b;-webkit-text-stroke:0.12px #3b3b3b;">貼り付け</div>
<div class="t" style="left:15.83px;top:129.40px;font-size:14.15px;transform:scaleX(0.7587);color:#3b3b3b;-webkit-text-stroke:0.12px #3b3b3b;">クリップボード</div>
<div class="t" style="left:137.63px;top:51.67px;font-size:14.59px;transform:scaleX(0.8898);color:#3b3b3b;-webkit-text-stroke:0.12px #3b3b3b;">ＭＳ Ｐゴシック</div>
<div class="t" style="left:331.04px;top:51.74px;font-size:15.71px;transform:scaleX(1.0732);color:#3b3b3b;-webkit-text-stroke:0.12px #3b3b3b;">11</div>
<div class="t" style="left:250.67px;top:128.29px;font-size:15.29px;transform:scaleX(0.7358);color:#3b3b3b;-webkit-text-stroke:0.12px #3b3b3b;">フォント</div>
<div class="t" style="left:525.54px;top:129.29px;font-size:14.27px;transform:scaleX(1.0666);color:#3b3b3b;-webkit-text-stroke:0.12px #3b3b3b;">配置</div>
<div class="t" style="left:673.90px;top:53.27px;font-size:13.26px;transform:scaleX(1.1338);color:#3b3b3b;-webkit-text-stroke:0.12px #3b3b3b;">標準</div>
<div class="t" style="left:726.82px;top:129.29px;font-size:14.27px;transform:scaleX(1.0781);color:#3b3b3b;-webkit-text-stroke:0.12px #3b3b3b;">数値</div>
<div class="t" style="left:856.63px;top:82.36px;font-size:14.87px;transform:scaleX(0.9988);color:#3b3b3b;-webkit-text-stroke:0.12px #3b3b3b;">条件付き</div>
<div class="t" style="left:864.93px;top:101.94px;font-size:14.53px;transform:scaleX(1.0308);color:#3b3b3b;-webkit-text-stroke:0.12px #3b3b3b;">書式</div>
<div class="t" style="left:916.96px;top:82.63px;font-size:14.97px;transform:scaleX(0.7445);color:#3b3b3b;-webkit-text-stroke:0.12px #3b3b3b;">テーブルとして</div>
<div class="t" style="left:922.63px;top:102.30px;font-size:14.15px;transform:scaleX(1.0435);color:#3b3b3b;-webkit-text-stroke:0.12px #3b3b3b;">書式設定</div>
<div class="t" style="left:1010.91px;top:80.26px;font-size:18.25px;transform:scaleX(0.6501);color:#3b3b3b;-webkit-text-stroke:0.12px #3b3b3b;">セルの</div>
<div class="t" style="left:1000.39px;top:100.77px;font-size:15.33px;transform:scaleX(0.7060);color:#3b3b3b;-webkit-text-stroke:0.12px #3b3b3b;">スタイル</div>
<div class="t" style="left:933.49px;top:128.46px;font-size:14.44px;transform:scaleX(0.7477);color:#3b3b3b;-webkit-text-stroke:0.12px #3b3b3b;">スタイル</div>
<div class="t" style="left:1106.92px;top:100.35px;font-size:13.89px;transform:scaleX(1.0851);color:#3b3b3b;-webkit-text-stroke:0.12px #3b3b3b;">書式</div>
<div class="t" style="left:1106.91px;top:127.84px;font-size:15.75px;transform:scaleX(0.7555);color:#3b3b3b;-webkit-text-stroke:0.12px #3b3b3b;">セル</div>
<div class="t" style="left:1106.90px;top:41.84px;font-size:14.56px;transform:scaleX(1.0387);color:#a8a8a8;-webkit-text-stroke:0.12px #a8a8a8;">挿入</div>
<div class="t" style="left:1106.61px;top:71.36px;font-size:13.64px;transform:scaleX(1.1425);color:#a8a8a8;-webkit-text-stroke:0.12px #a8a8a8;">削除</div>
<div class="t" style="left:18.12px;top:169.80px;font-size:20.00px;transform:scaleX(0.8511);color:#333;-webkit-text-stroke:0.12px #333;">D1</div>
<div class="t" style="left:329.95px;top:168.41px;font-size:15.71px;transform:scaleX(1.1384);color:#555;-webkit-text-stroke:0.12px #555;-webkit-text-stroke:0;">和文組織名_個人の場合表示名</div>
<div class="t" style="left:118.58px;top:914.60px;font-size:14.29px;transform:scaleX(1.1734);color:#217346;-webkit-text-stroke:0.12px #217346;">XML対応付け_連絡先</div>
<div class="t" style="left:104.00px;top:210.64px;font-size:18.43px;transform:scaleX(0.9245);color:#333;-webkit-text-stroke:0.12px #333;">A</div>
<div class="t" style="left:233.53px;top:210.64px;font-size:18.43px;transform:scaleX(1.0505);color:#333;-webkit-text-stroke:0.12px #333;">C</div>
<div class="t" style="left:447.64px;top:210.01px;font-size:18.57px;transform:scaleX(0.9064);color:#217346;-webkit-text-stroke:0.12px #217346;">D</div>
<div class="t" style="left:751.64px;top:210.21px;font-size:18.57px;transform:scaleX(0.9790);color:#333;-webkit-text-stroke:0.12px #333;">E</div>
<div class="t" style="left:1055.12px;top:210.21px;font-size:18.57px;transform:scaleX(0.9908);color:#333;-webkit-text-stroke:0.12px #333;">F</div>
</body></html>
